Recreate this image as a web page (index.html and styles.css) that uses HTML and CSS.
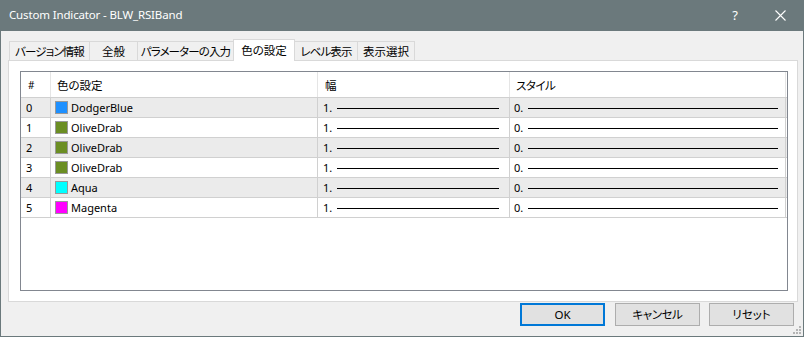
FILE: index.html
```html
<!DOCTYPE html>
<html lang="ja">
<head>
<meta charset="utf-8">
<title>Custom Indicator - BLW_RSIBand</title>
<link rel="stylesheet" href="styles.css">
</head>
<body>
<div class="window">
  <div class="titlebar">
    <span class="title">Custom Indicator - BLW_RSIBand</span>
    <span class="help">?</span>
    <svg class="close" width="11" height="11" viewBox="0 0 11 11"><path d="M0.5 0.5L10.5 10.5M10.5 0.5L0.5 10.5" stroke="#fff" stroke-width="1.1" fill="none"/></svg>
  </div>
  <div class="content">
    <div class="tabs">
      <div class="tab t1 kana">バージョン情報</div>
      <div class="tab t2">全般</div>
      <div class="tab t3 kana">パラメーターの入力</div>
      <div class="tab sel">色の設定</div>
      <div class="tab t5 kana">レベル表示</div>
      <div class="tab t6">表示選択</div>
    </div>
    <div class="panel">
      <div class="lv">
        <div class="row head">
          <div class="c c0">#</div>
          <div class="c c1">色の設定</div>
          <div class="c c2">幅</div>
          <div class="c c3">スタイル</div>
        </div>
        <div class="row alt">
          <div class="c c0">0</div>
          <div class="c c1"><span class="sw dodger"></span>DodgerBlue</div>
          <div class="c c2"><span class="num">1.</span><span class="ln"></span></div>
          <div class="c c3"><span class="num">0.</span><span class="ln"></span></div>
        </div>
        <div class="row">
          <div class="c c0">1</div>
          <div class="c c1"><span class="sw olive"></span>OliveDrab</div>
          <div class="c c2"><span class="num">1.</span><span class="ln"></span></div>
          <div class="c c3"><span class="num">0.</span><span class="ln"></span></div>
        </div>
        <div class="row alt">
          <div class="c c0">2</div>
          <div class="c c1"><span class="sw olive"></span>OliveDrab</div>
          <div class="c c2"><span class="num">1.</span><span class="ln"></span></div>
          <div class="c c3"><span class="num">0.</span><span class="ln"></span></div>
        </div>
        <div class="row">
          <div class="c c0">3</div>
          <div class="c c1"><span class="sw olive"></span>OliveDrab</div>
          <div class="c c2"><span class="num">1.</span><span class="ln"></span></div>
          <div class="c c3"><span class="num">0.</span><span class="ln"></span></div>
        </div>
        <div class="row alt">
          <div class="c c0">4</div>
          <div class="c c1"><span class="sw aqua"></span>Aqua</div>
          <div class="c c2"><span class="num">1.</span><span class="ln"></span></div>
          <div class="c c3"><span class="num">0.</span><span class="ln"></span></div>
        </div>
        <div class="row">
          <div class="c c0">5</div>
          <div class="c c1"><span class="sw magenta"></span>Magenta</div>
          <div class="c c2"><span class="num">1.</span><span class="ln"></span></div>
          <div class="c c3"><span class="num">0.</span><span class="ln"></span></div>
        </div>
      </div>
    </div>
    <div class="buttons">
      <div class="btn default">OK</div>
      <div class="btn cancel">キャンセル</div>
      <div class="btn">リセット</div>
    </div>
    <svg class="grip" width="9" height="9" viewBox="0 0 9 9">
      <rect x="6" y="0" width="2" height="2" fill="#b4b4b4"/>
      <rect x="3" y="3" width="2" height="2" fill="#b4b4b4"/>
      <rect x="6" y="3" width="2" height="2" fill="#b4b4b4"/>
      <rect x="0" y="6" width="2" height="2" fill="#b4b4b4"/>
      <rect x="3" y="6" width="2" height="2" fill="#b4b4b4"/>
      <rect x="6" y="6" width="2" height="2" fill="#b4b4b4"/>
    </svg>
  </div>
</div>
</body>
</html>
```
FILE: styles.css
```css
* { box-sizing: border-box; }
html, body { margin: 0; padding: 0; }
body {
  width: 804px;
  height: 337px;
  overflow: hidden;
  font-family: "Noto Sans", "Noto Sans CJK JP", sans-serif;
  font-size: 11px;
  color: #000;
  font-feature-settings: "palt";
}
.window {
  width: 804px;
  height: 337px;
  display: flex;
  flex-direction: column;
  border: 1px solid #6b797c;
  border-top: none;
}
.titlebar {
  height: 31px;
  flex: none;
  background: #6b797c;
  color: #fff;
  display: flex;
  align-items: center;
  padding-left: 8px;
}
.title { font-size: 11.5px; line-height: 16px; margin-top: -1px; letter-spacing: -0.15px; }
.help { margin-left: auto; font-size: 13px; line-height: 16px; margin-right: 37px; margin-top: -1px; }
.close { margin-right: 17px; }
.content {
  flex: 1;
  position: relative;
  background: #f0f0f0;
  display: flex;
  flex-direction: column;
  padding: 8px 5px 10px 7px;
}
.tabs {
  height: 21px;
  display: flex;
  align-items: flex-end;
  padding-left: 2px;
}
.tab {
  height: 19px;
  border: 1px solid #d9d9d9;
  border-bottom: none;
  margin-left: -1px;
  background: #f0f0f0;
  display: flex;
  align-items: center;
  justify-content: center;
  font-family: "Noto Sans CJK JP", sans-serif;
  font-size: 11.5px;
  line-height: 16px;
  white-space: nowrap;
  color: #000;
}
.tab.kana { letter-spacing: -0.9px; }
.t1 { width: 81px; }
.t2 { width: 49px; }
.t3 { width: 97px; }
.sel {
  width: 62px;
  height: 22px;
  margin-bottom: -1px;
  background: #fff;
  position: relative;
  z-index: 1;
  padding-bottom: 2px;
}
.t5 { width: 64px; }
.t6 { width: 58px; }
.panel {
  height: 242px;
  flex: none;
  border: 1px solid #d9d9d9;
  background: #fff;
  padding: 10px 9px 10px 11px;
  display: flex;
}
.lv {
  flex: 1;
  border: 1px solid #828790;
  background: #fff;
}
.row {
  display: flex;
  height: 20px;
  border-bottom: 1px solid #d0d0d0;
}
.row.alt { background: #ebebeb; }
.row.head {
  height: 26px;
  background: #fff;
}
.c {
  flex: none;
  display: flex;
  align-items: center;
  border-right: 1px solid #d0d0d0;
  line-height: 16px;
  white-space: nowrap;
}
.head .c { border-right-color: #e5e5e5; font-family: "Noto Sans CJK JP", sans-serif; font-size: 11.5px; }
.c0 { width: 30px; padding-left: 5px; }
.head .c0 { padding-left: 7px; font-family: "Noto Sans", sans-serif; font-size: 10px; }
.c1 { width: 267px; padding-left: 4px; }
.head .c1 { padding-left: 6px; }
.c2 { width: 192px; padding-left: 5px; padding-right: 10px; }
.head .c2 { padding-left: 7px; }
.c3 { width: 276px; padding-left: 4px; padding-right: 7px; }
.head .c3 { padding-left: 6px; letter-spacing: -0.5px; }
.sw {
  width: 13px;
  height: 13px;
  border: 1px solid #999;
  margin-right: 3px;
  flex: none;
}
.dodger { background: #1e90ff; }
.olive { background: #6b8e23; }
.aqua { background: #00ffff; }
.magenta { background: #ff00ff; }
.num { flex: none; margin-right: 5px; }
.ln { flex: 1; height: 1px; background: #000; margin-top: 1px; }
.buttons {
  display: flex;
  justify-content: flex-end;
  margin-top: 1px;
  padding-right: 4px;
}
.btn {
  width: 85px;
  height: 23px;
  background: #e1e1e1;
  border: 1px solid #adadad;
  display: flex;
  align-items: center;
  justify-content: center;
  font-family: "Noto Sans", "Noto Sans CJK JP", sans-serif;
  font-size: 11.5px;
  line-height: 16px;
  margin-left: 9px;
}
.btn.cancel, .btn.reset { letter-spacing: -0.4px; }
.btn.default { border: 2px solid #0078d7; }
.btn.cancel { margin-left: 10px; }
.grip { position: absolute; right: 1px; bottom: 1px; }
```
